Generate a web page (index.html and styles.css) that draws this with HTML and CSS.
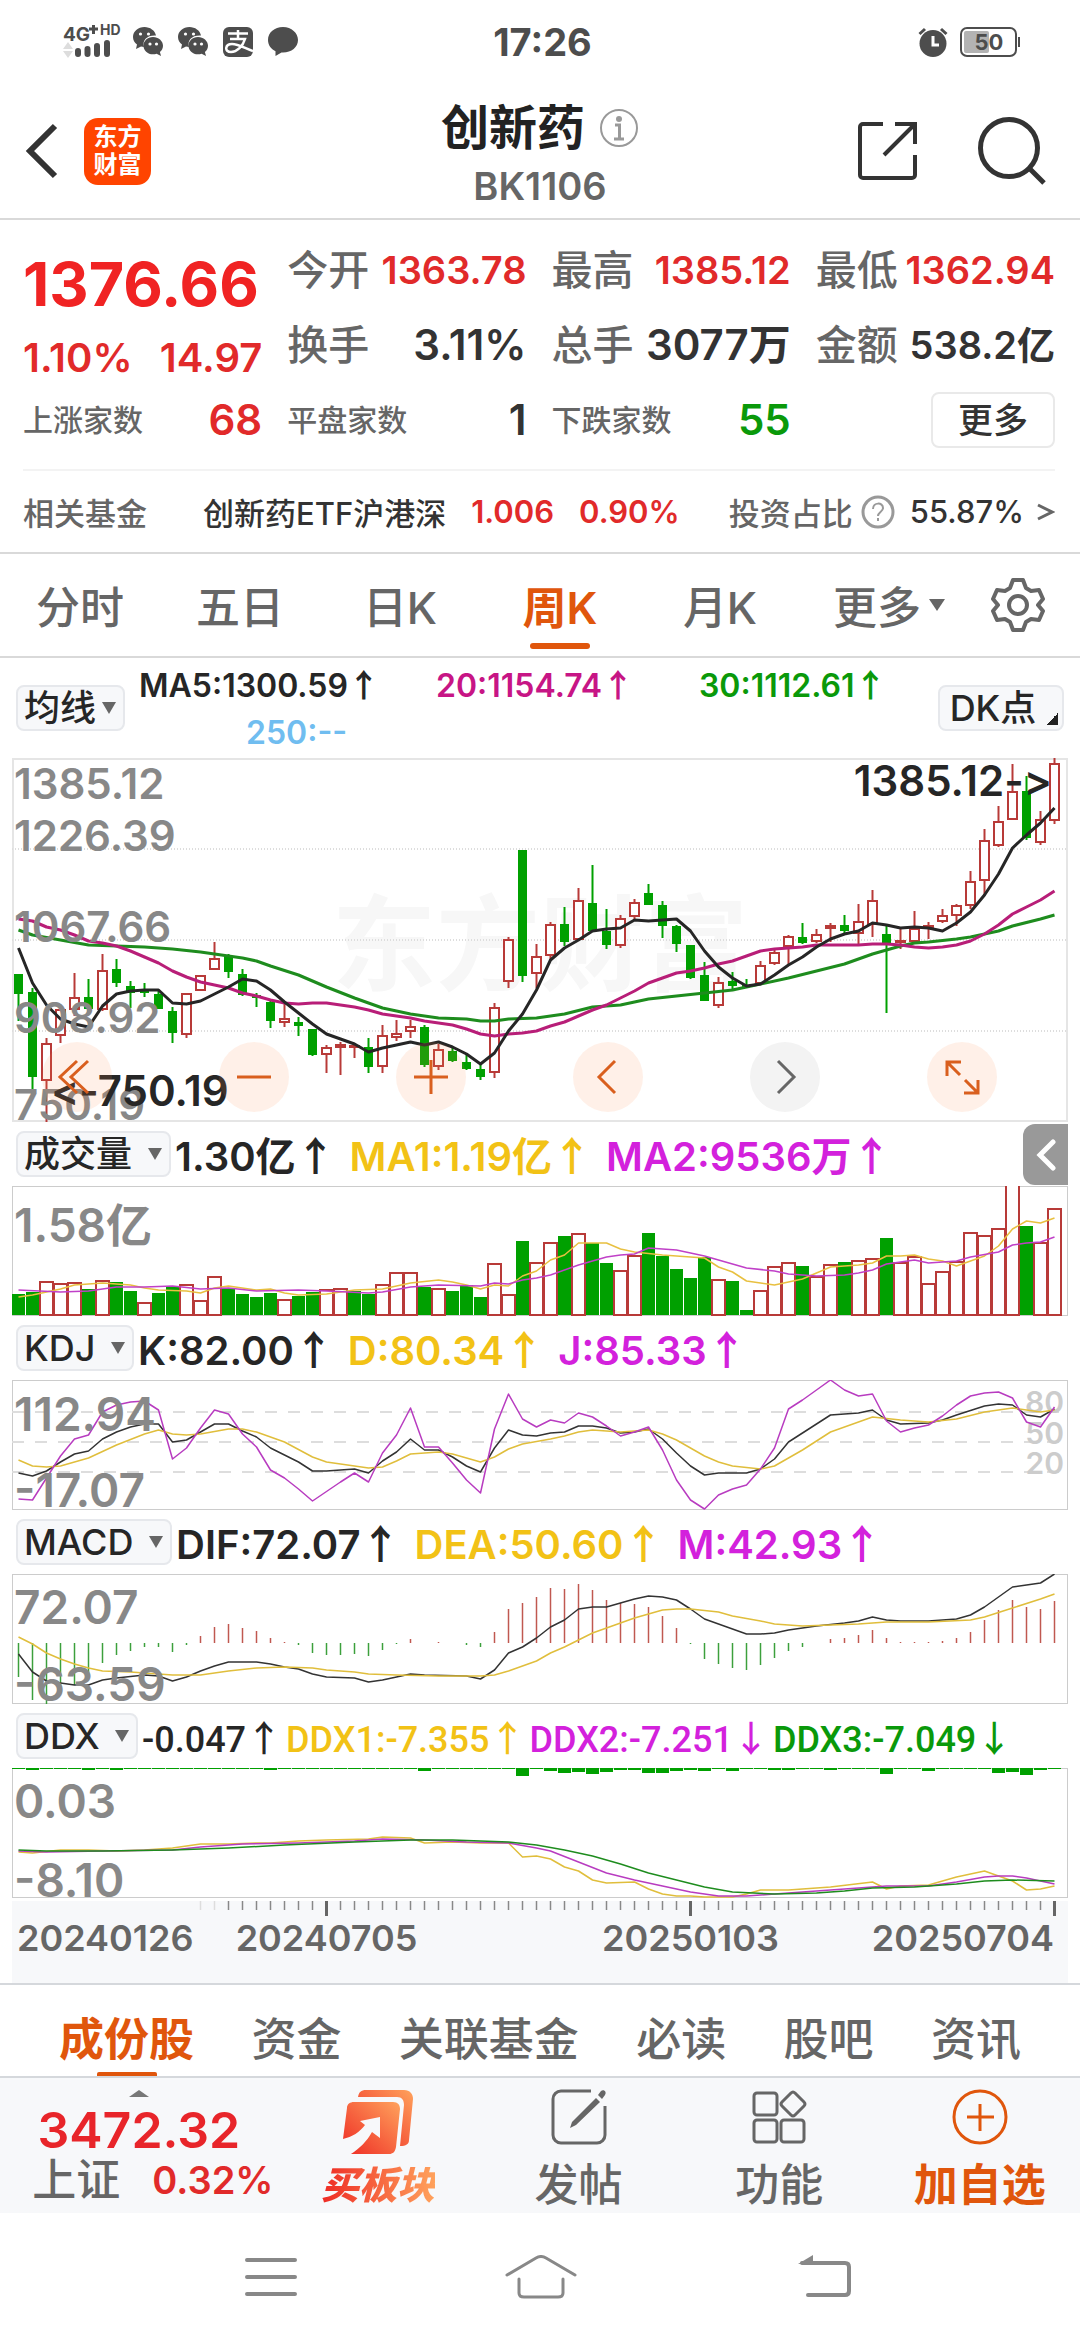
FILE: index.html
```
<!DOCTYPE html>
<html lang="zh-CN">

<head>
  <meta charset="UTF-8">
  <meta name="viewport" content="width=device-width, initial-scale=1.0">
  <title>创新药 BK1106</title>
  <link rel="stylesheet" href="styles.css">
</head>

<body>
  <div class="status">
    <div class="status-side">
      <svg class="signal" width="62" height="38" viewBox="0 0 62 38">
        <text x="0" y="18" class="signal-4g">4G</text>
        <path d="M26 6h9M30.500 2v9" stroke="#4d4d4d" stroke-width="3" />
        <text x="37" y="12" class="signal-hd">HD</text>
        <path d="M0 26l5-7 5 7zM0 28l5 7 5-7z" fill="#ddd" />
        <path d="M15 28v3M24.500 26v5M34 23v8M44 20v11" stroke="#4d4d4d" stroke-width="6" stroke-linecap="round" />
      </svg>
      <svg width="30" height="30" viewBox="0 0 30 30">
        <use href="#wechat" />
      </svg>
      <svg width="30" height="30" viewBox="0 0 30 30">
        <g id="wechat">
          <path d="M11.500 0C5 0 0 4.500 0 10c0 3 1.500 5.600 4 7.400L3 22l5-2.500c1 .3 2 .4 3 .4C9 13 14 8 23 8.500 22 3.500 17 0 11.500 0z" fill="#4d4d4d" />
          <path d="M20 10c-5.500 0-9.500 4-9.500 8.700s4 8.600 9.500 8.600c1.300 0 2.500-.2 3.600-.6L28 29l-1.100-4c2-1.600 3.100-3.800 3.100-6.300C30 14 25.500 10 20 10z" fill="#4d4d4d" />
          <circle cx="7.500" cy="7" r="1.600" fill="#fff" />
          <circle cx="15.500" cy="7" r="1.600" fill="#fff" />
          <circle cx="17" cy="17" r="1.600" fill="#fff" />
          <circle cx="23.500" cy="17" r="1.600" fill="#fff" />
        </g>
      </svg>
      <svg width="30" height="30" viewBox="0 0 30 30">
        <rect width="30" height="30" rx="6" fill="#4d4d4d" />
        <path d="M15 3v9M5 6.500h20M7 12h15C20 19 14 25 8 25c-7 0-6-8 1-8 7 0 14 5 21 7" fill="none" stroke="#fff" stroke-width="2.500" />
      </svg>
      <svg width="30" height="30" viewBox="0 0 30 30">
        <path d="M15 0C6.500 0 0 5.500 0 13c0 5 3 9 7.500 11.300V29l6-3.500H15c8.500 0 15-5.500 15-12.500S23.500 0 15 0z" fill="#4d4d4d" />
      </svg>
    </div>
    <span class="clock">17:26</span>
    <div class="status-side status-right">
      <svg width="30" height="30" viewBox="0 0 30 30">
        <circle cx="15" cy="16.500" r="13.500" fill="#4d4d4d" />
        <path d="M1.500 7L7 2M28.500 7L23 2" stroke="#4d4d4d" stroke-width="3" />
        <path d="M15 9v9h6" fill="none" stroke="#fff" stroke-width="3" />
      </svg>
      <svg width="62" height="30" viewBox="0 0 62 30">
        <rect x="1" y="1" width="55" height="28" rx="6" fill="none" stroke="#4d4d4d" stroke-width="2" />
        <rect x="4" y="4" width="25" height="22" rx="2" fill="#b3b3b3" />
        <rect x="58" y="10" width="2" height="10" fill="#4d4d4d" />
        <text x="29" y="23" class="battery-text">50</text>
      </svg>
    </div>
  </div>

  <header class="header">
    <div class="header-side">
      <button class="icon-btn" aria-label="返回">
        <svg width="34" height="60" viewBox="0 0 34 60">
          <path d="M31 5L6 30l25 25" fill="none" stroke="#333" stroke-width="6" />
        </svg>
      </button>
      <a class="logo" href="#">东方<br>财富</a>
    </div>
    <div class="title">
      <h1>创新药
        <svg width="40" height="40" viewBox="0 0 40 40">
          <circle cx="20" cy="20" r="18" fill="none" stroke="#999" stroke-width="2" />
          <circle cx="20" cy="11" r="3" fill="#999" />
          <path d="M16 17h4.500v13M15 31h10" fill="none" stroke="#999" stroke-width="3" />
        </svg>
      </h1>
      <p>BK1106</p>
    </div>
    <div class="header-side header-right">
      <button class="icon-btn" aria-label="分享">
        <svg width="60" height="60" viewBox="0 0 60 60">
          <path d="M25 3H5a3 3 0 0 0-3 3v48a3 3 0 0 0 3 3h49a3 3 0 0 0 3-3V34M37 3h20v20M57 3L26 34" fill="none" stroke="#333" stroke-width="4" />
        </svg>
      </button>
      <button class="icon-btn" aria-label="搜索">
        <svg width="68" height="68" viewBox="0 0 68 68">
          <circle cx="31" cy="31" r="28.500" fill="none" stroke="#333" stroke-width="5" />
          <path d="M51 51l15 15" stroke="#333" stroke-width="5" />
        </svg>
      </button>
    </div>
  </header>

  <section class="quote">
    <div class="stats">
      <div class="price">
        <strong>1376.66</strong>
        <div class="change"><span>1.10%</span><span>14.97</span></div>
      </div>
      <div class="stat"><span>今开</span><b class="red small">1363.78</b></div>
      <div class="stat"><span>最高</span><b class="red small">1385.12</b></div>
      <div class="stat"><span>最低</span><b class="red small">1362.94</b></div>
      <div class="stat"><span>换手</span><b>3.11%</b></div>
      <div class="stat"><span>总手</span><b>3077万</b></div>
      <div class="stat"><span>金额</span><b class="small">538.2亿</b></div>
      <div class="stat count"><span>上涨家数</span><b class="red">68</b></div>
      <div class="stat count"><span>平盘家数</span><b>1</b></div>
      <div class="stat count"><span>下跌家数</span><b class="green">55</b></div>
      <div class="stat"><button class="more-btn">更多</button></div>
    </div>
    <div class="fund">
      <span class="fund-label">相关基金</span>
      <a href="#">创新药ETF沪港深</a>
      <span class="red">1.006</span>
      <span class="red">0.90%</span>
      <span class="fund-ratio">投资占比
        <svg width="34" height="34" viewBox="0 0 34 34">
          <circle cx="17" cy="17" r="15" fill="none" stroke="#999" stroke-width="3" />
          <path d="M12 14c0-7 10-7 10-1 0 4-5 4-5 8M17 23v3" fill="none" stroke="#999" stroke-width="2" />
        </svg>
      </span>
      <span>55.87%</span>
      <svg width="18" height="20" viewBox="0 0 18 20">
        <path d="M1 3l14 7-14 7" fill="none" stroke="#666" stroke-width="3" />
      </svg>
    </div>
  </section>

  <nav class="periods">
    <a href="#">分时</a>
    <a href="#">五日</a>
    <a href="#">日K</a>
    <a href="#" class="active">周K</a>
    <a href="#">月K</a>
    <a href="#">更多<i class="caret"></i></a>
    <button class="icon-btn" aria-label="设置">
      <svg width="54" height="54" viewBox="0 0 54 54">
        <path d="M22 2h10l3 8 5 3 8-1 4 9-5 6 5 6-4 9-8-1-5 3-3 8H22l-3-8-5-3-8 1-4-9 5-6-5-6 4-9 8 1 5-3z" fill="none" stroke="#666" stroke-width="4" stroke-linejoin="round" />
        <circle cx="27" cy="27" r="9" fill="none" stroke="#666" stroke-width="4" />
      </svg>
    </button>
  </nav>

  <main class="charts">
    <div class="ma-row">
      <label class="picker picker-ma"><select aria-label="主图指标"><option>均线</option></select></label>
      <div class="ma-values">
        <span>MA5:1300.59<i class="arrow">↑</i></span>
        <span class="pink">20:1154.74<i class="arrow">↑</i></span>
        <span class="green">30:1112.61<i class="arrow">↑</i></span>
        <span class="blue">250:--</span>
      </div>
      <button class="dk-btn">DK点</button>
    </div>
    <div class="main-chart">
      <svg class="plot plot-main" id="kline" viewBox="0 0 1056 364"></svg>
      <div class="tools">
        <button aria-label="最左"><svg viewBox="0 0 70 70"><path d="M35 19L18 35l17 16M46 19L29 35l17 16" /></svg></button>
        <button aria-label="缩小"><svg viewBox="0 0 70 70"><path d="M18 35h34" /></svg></button>
        <button aria-label="放大"><svg viewBox="0 0 70 70"><path d="M18 35h34M35 18v34" /></svg></button>
        <button aria-label="左移"><svg viewBox="0 0 70 70"><path d="M42 19L26 35l16 16" /></svg></button>
        <button aria-label="右移" class="off"><svg viewBox="0 0 70 70"><path d="M28 19l16 16-16 16" /></svg></button>
        <button aria-label="全屏"><svg viewBox="0 0 70 70"><path d="M20 34V20h14M20 20l13 13M51 38v13H37M51 51L38 38" /></svg></button>
      </div>
    </div>

    <div class="ind-row">
      <label class="picker"><select aria-label="副图一"><option>成交量</option></select></label>
      <span>1.30亿<i class="arrow">↑</i></span>
      <span class="yellow">MA1:1.19亿<i class="arrow">↑</i></span>
      <span class="purple">MA2:9536万<i class="arrow">↑</i></span>
      <button class="side-btn" aria-label="展开">
        <svg width="20" height="32" viewBox="0 0 20 32">
          <path d="M17 3L4 16l13 13" fill="none" stroke="#fff" stroke-width="5" stroke-linecap="round" />
        </svg>
      </button>
    </div>
    <svg class="plot" id="volume" viewBox="0 0 1056 130"></svg>

    <div class="ind-row">
      <label class="picker"><select aria-label="副图二"><option>KDJ</option></select></label>
      <span>K:82.00<i class="arrow">↑</i></span>
      <span class="yellow">D:80.34<i class="arrow">↑</i></span>
      <span class="purple">J:85.33<i class="arrow">↑</i></span>
    </div>
    <svg class="plot" id="kdj" viewBox="0 0 1056 130"></svg>

    <div class="ind-row">
      <label class="picker"><select aria-label="副图三"><option>MACD</option></select></label>
      <span>DIF:72.07<i class="arrow">↑</i></span>
      <span class="yellow">DEA:50.60<i class="arrow">↑</i></span>
      <span class="purple">M:42.93<i class="arrow">↑</i></span>
    </div>
    <svg class="plot" id="macd" viewBox="0 0 1056 130"></svg>

    <div class="ind-row tight">
      <label class="picker"><select aria-label="副图四"><option>DDX</option></select></label>
      <span>-0.047<i class="arrow">↑</i></span>
      <span class="yellow">DDX1:-7.355<i class="arrow">↑</i></span>
      <span class="purple">DDX2:-7.251<i class="arrow">↓</i></span>
      <span class="green">DDX3:-7.049<i class="arrow">↓</i></span>
    </div>
    <svg class="plot" id="ddx" viewBox="0 0 1056 130"></svg>
    <svg class="axis" id="axis" viewBox="0 0 1056 82"></svg>
  </main>

  <nav class="sections">
    <a href="#" class="active">成份股</a>
    <a href="#">资金</a>
    <a href="#">关联基金</a>
    <a href="#">必读</a>
    <a href="#">股吧</a>
    <a href="#">资讯</a>
  </nav>

  <footer class="toolbar">
    <a class="index" href="#">
      <i class="fold"></i>
      <strong>3472.32</strong>
      <span class="index-row"><span>上证</span><span class="red">0.32%</span></span>
    </a>
    <a class="buy" href="#">
      <svg width="70" height="66" viewBox="0 0 70 66">
        <defs>
          <linearGradient id="hot" x1="0" y1="1" x2="1" y2="0">
            <stop offset="0" stop-color="#ee2a24" />
            <stop offset="1" stop-color="#ffa25c" />
          </linearGradient>
        </defs>
        <path d="M15 8c1-5 3-7 8-7h38c6 0 9 4 9 9l-4 41c0 4-3 6-9 6l4-41c0-5-2-8-7-8z" fill="url(#hot)" />
        <path d="M4 19c0-4 3-6 7-6h39c5 0 7 3 7 7l-4 38c-1 5-3 7-7 7H8c9-6 16-13 21-22l8 6V28l-20 4 5 4C17 43 9 48 0 50z" fill="url(#hot)" />
      </svg>
      <span>买板块</span>
    </a>
    <a href="#">
      <svg width="56" height="56" viewBox="0 0 56 56">
        <path d="M40 2H10a8 8 0 0 0-8 8v36a8 8 0 0 0 8 8h36a8 8 0 0 0 8-8V17" fill="none" stroke="#666" stroke-width="3" />
        <path d="M45 9l4 4-24 23-6 3 2-6zM47 6l3-4c3-2 6 1 4 4l-3 4z" fill="#666" />
      </svg>
      <span>发帖</span>
    </a>
    <a href="#">
      <svg width="56" height="56" viewBox="0 0 56 56" fill="none" stroke="#666" stroke-width="3">
        <rect x="3" y="4" width="23" height="22" rx="3" />
        <rect x="3" y="31" width="23" height="22" rx="3" />
        <rect x="30" y="31" width="23" height="22" rx="3" />
        <path d="M40 4q2-2 4 0l9 9q2 2 0 4l-9 9q-2 2-4 0l-9-9q-2-2 0-4z" />
      </svg>
      <span>功能</span>
    </a>
    <a class="add" href="#">
      <svg width="56" height="56" viewBox="0 0 56 56" fill="none" stroke="#e0560c" stroke-width="3">
        <circle cx="28" cy="28" r="26" />
        <path d="M15 28h27M28 15v27" />
      </svg>
      <span>加自选</span>
    </a>
  </footer>

  <div class="sysnav">
    <button class="icon-btn" aria-label="菜单">
      <svg width="72" height="44" viewBox="0 0 72 44">
        <path d="M12 5h48M12 22h48M12 39h48" stroke="#888" stroke-width="4" stroke-linecap="round" />
      </svg>
    </button>
    <button class="icon-btn" aria-label="主页">
      <svg width="72" height="44" viewBox="0 0 72 44">
        <path d="M2 20L31 3q5-3 10 0l29 17M14 24v14q0 4 5 4h34q5 0 5-4V24" fill="none" stroke="#888" stroke-width="3" stroke-linecap="round" />
      </svg>
    </button>
    <button class="icon-btn" aria-label="后退">
      <svg width="72" height="44" viewBox="0 0 72 44">
        <path d="M14 8h43q4 0 4 4v24q0 4-4 4H20" fill="none" stroke="#888" stroke-width="4" stroke-linecap="round" />
        <path d="M10 9l15-9v9z" fill="#888" />
      </svg>
    </button>
  </div>

  <script src="script.js"></script>
</body>

</html>
```
FILE: styles.css
```
* {
  box-sizing: border-box;
}

body {
  margin: 0;
  background: #fff;
  color: #333;
  font-family: Inter, "Noto Sans CJK SC", sans-serif;
  font-weight: 500;
}

h1,
p {
  margin: 0;
}

a {
  color: inherit;
  text-decoration: none;
}

button,
select {
  font: inherit;
  color: inherit;
  border: 0;
  padding: 0;
  background: none;
}

svg {
  display: block;
  flex: none;
}

i {
  font-style: normal;
}

.icon-btn {
  display: flex;
  align-items: center;
  justify-content: center;
}

.red {
  color: #e12a2a;
}

.green {
  color: #0a990a;
}

.yellow {
  color: #f2c216;
}

.purple {
  color: #d321dc;
}

.pink {
  color: #c71585;
}

.blue {
  color: #70bdf0;
}

/* status bar */
.status {
  display: grid;
  grid-template-columns: 1fr auto 1fr;
  align-items: center;
  height: 84px;
  padding: 0 58px 0 63px;
  color: #4d4d4d;
}

.status-side {
  display: flex;
  align-items: center;
  gap: 15px;
}

.status-right {
  justify-content: flex-end;
  gap: 12px;
}

.signal {
  margin-right: -7px;
  overflow: visible;
}

.signal-4g,
.signal-hd,
.battery-text {
  font-weight: 700;
  fill: #4d4d4d;
}

.signal-4g {
  font-size: 19px;
}

.signal-hd {
  font-size: 14px;
}

.battery-text {
  font-size: 22px;
  text-anchor: middle;
}

.clock {
  font-size: 38px;
  font-weight: 700;
}

/* header */
.header {
  display: grid;
  grid-template-columns: 1fr auto 1fr;
  align-items: center;
  height: 136px;
  padding: 0 24px;
  border-bottom: 2px solid #d9d9d9;
}

.header-side {
  display: flex;
  align-items: center;
  gap: 26px;
}

.header-right {
  justify-content: flex-end;
  gap: 60px;
  padding-right: 10px;
}

.logo {
  width: 67px;
  height: 67px;
  padding-top: 5px;
  border-radius: 14px;
  background: #ff4400;
  color: #fff;
  font-size: 24px;
  font-weight: 700;
  line-height: 28px;
  text-align: center;
}

.title {
  padding-top: 5px;
  text-align: center;
}

.title h1 {
  display: flex;
  align-items: center;
  gap: 14px;
  color: #222;
  font-size: 48px;
  font-weight: 600;
  line-height: 64px;
}

.title p {
  color: #666;
  font-size: 38px;
  font-weight: 600;
  line-height: 52px;
}

/* quote */
.quote {
  padding: 12px 25px 0 23px;
  border-bottom: 2px solid #d9d9d9;
}

.stats {
  display: grid;
  grid-template-columns: repeat(4, 1fr);
  grid-auto-rows: 75px;
  column-gap: 25px;
  padding-bottom: 12px;
  border-bottom: 2px solid #f3f3f3;
}

.price {
  grid-row: span 2;
  padding-top: 10px;
  color: #e12a2a;
}

.price strong {
  display: block;
  color: #f02323;
  font-size: 61px;
  line-height: 84px;
}

.change {
  display: flex;
  justify-content: space-between;
  font-size: 40px;
  font-weight: 600;
  line-height: 64px;
}

.stat {
  display: flex;
  align-items: center;
  justify-content: space-between;
  color: #666;
  font-size: 41px;
  line-height: 56px;
  white-space: nowrap;
}

.stat b {
  color: #333;
  font-size: 42px;
  font-weight: 600;
}

.stat b.red {
  color: #e12a2a;
}

.stat b.green {
  color: #0a990a;
}

.stat b.small {
  font-size: 38px;
}

.count {
  font-size: 30px;
}

.more-btn {
  width: 124px;
  height: 56px;
  margin-left: auto;
  border: 2px solid #e9e9e9;
  border-radius: 8px;
  color: #333;
  font-size: 35px;
  line-height: 50px;
}

.fund {
  display: flex;
  align-items: center;
  height: 81px;
  gap: 25px;
  font-size: 31px;
  white-space: nowrap;
}

.fund > * {
  flex: none;
}

.fund .red {
  font-weight: 600;
}

.fund-label {
  width: 155px;
  color: #666;
}

.fund-ratio {
  display: flex;
  align-items: center;
  gap: 8px;
  margin: 0 -10px 0 auto;
  color: #666;
}

.fund svg:last-child {
  margin-left: -12px;
}

.fund-ratio svg:last-child {
  margin-left: 0;
}

/* period tabs */
.periods {
  display: grid;
  grid-template-columns: repeat(5, 160fr) 178fr 80fr;
  height: 104px;
  padding-right: 22px;
  border-bottom: 2px solid #d9d9d9;
  color: #666;
  font-size: 44px;
}

.periods a {
  position: relative;
  display: flex;
  align-items: center;
  justify-content: center;
}

.active {
  color: #e0560c;
  font-weight: 600;
}

.periods .active::after,
.sections .active::after {
  content: "";
  position: absolute;
  bottom: 7px;
  left: 50%;
  width: 60px;
  height: 6px;
  margin-left: -30px;
  border-radius: 3px;
  background: #e0560c;
}

.caret {
  margin-left: 8px;
  border: 8px solid transparent;
  border-top: 12px solid #666;
  border-bottom: 0;
}

/* charts */
.charts {
  padding: 0 12px;
  color: #262626;
}

.ma-row {
  display: flex;
  align-items: center;
  height: 100px;
  padding: 0 4px;
}

.picker {
  position: relative;
  display: inline-flex;
  flex: none;
}

.picker select {
  appearance: none;
  height: 46px;
  padding: 0 36px 0 6px;
  border: 2px solid #e6e8ec;
  border-radius: 8px;
  background: #f7f8fa;
  font-size: 36px;
  font-weight: 500;
  line-height: 42px;
}

.picker::after {
  content: "";
  position: absolute;
  top: 17px;
  right: 9px;
  border: 7px solid transparent;
  border-top: 12px solid #666;
  border-bottom: 0;
  pointer-events: none;
}

.picker-ma select {
  padding-right: 26px;
}

.ma-values {
  display: grid;
  grid-template-columns: 297px 263px 1fr;
  flex: 1;
  padding-left: 14px;
  font-size: 32px;
  font-weight: 600;
  line-height: 47px;
  white-space: nowrap;
}

.ma-values .blue {
  padding-left: 107px;
}

.arrow {
  font-family: "Noto Sans CJK SC", sans-serif;
}

.dk-btn {
  width: 126px;
  height: 46px;
  padding-right: 16px;
  border: 2px solid #e6e8ec;
  border-radius: 8px;
  background: linear-gradient(135deg, transparent 50%, #222 50%) right 4px bottom 4px / 12px 12px no-repeat #f7f8fa;
  font-size: 36px;
  line-height: 42px;
  white-space: nowrap;
}

.main-chart {
  position: relative;
}

.plot {
  width: 100%;
  box-shadow: inset 0 0 0 1px #ccc;
}

.plot-main {
  box-shadow: inset 0 0 0 2px #e5e5e5;
}

.plot text {
  fill: #888;
  font-size: 46px;
  font-weight: 600;
}

.plot-main text {
  font-size: 42px;
}

.plot .mark {
  fill: #262626;
  font-variant-ligatures: none;
}

.plot .level {
  fill: #ccc;
  font-size: 30px;
  text-anchor: end;
}

.plot .watermark {
  fill: #f7f7f7;
  font-size: 104px;
  font-weight: 700;
}

.tools {
  position: absolute;
  left: 0;
  right: 0;
  bottom: 10px;
  display: flex;
  justify-content: space-between;
  padding: 0 71px 0 30px;
}

.tools button {
  width: 70px;
  height: 70px;
  border-radius: 50%;
  background: rgba(255, 140, 80, .13);
}

.tools path {
  fill: none;
  stroke: #d95f1e;
  stroke-width: 3;
}

.tools .off {
  background: #f3f3f3;
}

.tools .off path {
  stroke: #666;
}

.ind-row {
  position: relative;
  display: flex;
  align-items: center;
  height: 64px;
  padding-left: 4px;
  font-size: 40px;
  font-weight: 600;
  white-space: nowrap;
}

.ind-row span {
  margin: 0 10px 0 4px;
}

.tight {
  font-family: Roboto, "Noto Sans CJK SC", sans-serif;
  font-size: 36px;
  font-weight: 500;
}

.tight select {
  font-family: Inter, sans-serif;
}

.tight span {
  margin-right: 0;
}

.side-btn {
  position: absolute;
  right: 0;
  top: 2px;
  display: flex;
  align-items: center;
  justify-content: center;
  width: 45px;
  height: 61px;
  border-radius: 12px 0 0 12px;
  background: #999;
}

.axis {
  width: 100%;
  margin-top: 3px;
  background: #f7f8fa;
}

.axis text {
  fill: #666;
  font-size: 36px;
  font-weight: 600;
}

/* section tabs */
.sections {
  display: flex;
  justify-content: space-between;
  height: 95px;
  padding: 0 59px;
  border-top: 2px solid #d5d8dc;
  border-bottom: 2px solid #d5d8dc;
  color: #666;
  font-size: 45px;
}

.sections a {
  position: relative;
  display: flex;
  align-items: center;
  padding-top: 12px;
}

.sections .active {
  color: #e0560c;
}

.sections .active::after {
  bottom: 0;
  height: 4px;
  border-radius: 2px 2px 0 0;
}

/* bottom toolbar */
.toolbar {
  display: grid;
  grid-template-columns: 277fr repeat(4, 200fr);
  height: 135px;
  background: #f7f8fa;
  color: #666;
  font-size: 44px;
}

.toolbar a {
  display: flex;
  flex-direction: column;
  align-items: center;
  justify-content: space-between;
  padding: 11px 0 0;
  line-height: 56px;
}

.toolbar .index {
  justify-content: flex-start;
  padding: 12px 0 0;
}

.fold {
  border: 10px solid transparent;
  border-bottom: 7px solid #777;
  border-top: 0;
}

.index strong {
  margin-top: 5px;
  color: #e8252a;
  font-size: 50px;
  font-weight: 600;
}

.index-row {
  display: flex;
  gap: 32px;
  margin-left: 28px;
  line-height: 44px;
}

.index-row .red {
  font-size: 38px;
  font-weight: 600;
}

.buy span {
  background: linear-gradient(90deg, #ee2a24, #ffa25c);
  background-clip: text;
  color: transparent;
  font-size: 38px;
  font-style: italic;
  font-weight: 900;
}

.add {
  color: #e0560c;
  font-weight: 600;
}

/* system navigation */
.sysnav {
  display: grid;
  grid-template-columns: 270fr 270fr 296fr;
  padding: 42px 108px 36px 136px;
}
```
FILE: script.js
```
const STEP = 14
const FIRST = 6.5
const RED = '#b83a38'
const GREEN = '#00a000'

// [high, open/close top, open/close bottom, low, rising]
const candles = [
  [216, 216, 236, 263, 0], [230, 234, 319, 333, 0], [280, 285, 323, 364, 1], [251, 251, 278, 285, 1],
  [215, 239, 252, 258, 1], [221, 239, 251, 256, 0], [196, 212, 252, 253, 1], [201, 211, 225, 229, 0],
  [223, 228, 235, 250, 0], [225, 233, 235, 239, 0], [233, 236, 251, 251, 0], [249, 253, 275, 285, 0],
  [235, 235, 277, 280, 1], [217, 217, 233, 233, 1], [184, 200, 212, 212, 1], [196, 198, 214, 220, 0],
  [211, 216, 237, 238, 0], [235, 237, 240, 249, 0], [242, 244, 263, 270, 0], [244, 260, 265, 269, 1],
  [259, 264, 268, 278, 0], [271, 271, 297, 298, 0], [287, 289, 297, 315, 1], [284, 286, 290, 317, 1],
  [286, 287, 288, 300, 1], [280, 289, 309, 315, 0], [267, 277, 309, 315, 1], [262, 275, 280, 283, 1],
  [262, 268, 274, 280, 1], [267, 269, 307, 309, 0], [286, 291, 309, 312, 1], [290, 293, 303, 304, 0],
  [295, 304, 311, 312, 0], [306, 311, 319, 322, 0], [245, 249, 315, 320, 1], [179, 181, 224, 230, 1],
  [92, 92, 218, 224, 0], [186, 198, 216, 230, 1], [164, 166, 198, 202, 1], [149, 166, 184, 188, 0],
  [130, 142, 182, 182, 1], [107, 145, 173, 173, 0], [151, 173, 187, 191, 0], [157, 160, 188, 190, 1],
  [141, 144, 159, 162, 1], [126, 135, 147, 147, 0], [143, 147, 168, 180, 0], [167, 168, 186, 194, 0],
  [187, 187, 220, 221, 0], [204, 217, 243, 243, 0], [219, 224, 248, 250, 1], [214, 223, 228, 231, 0],
  [221, 227, 228, 229, 0], [203, 207, 226, 226, 1], [192, 194, 206, 207, 1], [177, 178, 189, 207, 1],
  [165, 179, 185, 186, 0], [171, 176, 184, 185, 1], [165, 167, 171, 184, 1], [157, 167, 173, 175, 0],
  [146, 163, 176, 188, 1], [132, 142, 167, 179, 1], [168, 176, 185, 255, 0], [171, 182, 184, 191, 1],
  [153, 170, 184, 185, 1], [164, 167, 170, 181, 1], [151, 157, 164, 165, 1], [146, 147, 158, 168, 1],
  [113, 123, 148, 151, 1], [71, 82, 123, 138, 1], [48, 63, 88, 89, 1], [6, 33, 62, 62, 1],
  [18, 33, 80, 82, 0], [53, 61, 85, 87, 1], [0, 5, 63, 66, 1]
]

// negative = falling week
const volumes = [
  -22, -24, 35, 33, 34, -27, 36, -34, -25, 14, -23, -30, 32, 16, 40, -27, -22, -19, -23, 17,
  -20, -24, 27, 28, -25, -22, 32, 44, 44, -29, 28, -25, -31, -19, 53, 22, -75, 54, 74, -80,
  83, -73, -53, 46, 61, -83, -60, -47, -38, -59, 37, -35, -6, 26, 50, 54, -50, 40, 52, -54,
  56, 58, -78, 54, 60, 33, 45, 55, 84, 81, 88, 134, -90, 74, 108
]

const macdBars = [
  -34, -57, -61, -50, -42, -34, -20, -12, -8, -4, -4, -9, -2, 7, 16, 19, 15, 12, 5, 1,
  -2, -10, -12, -12, -11, -13, -7, -1, 4, 0, 1, 0, -2, -4, 11, 34, 40, 46, 55, 54,
  59, 53, 43, 40, 39, 36, 27, 15, -1, -16, -21, -25, -27, -22, -15, -8, -4, 0, 4, 5,
  8, 13, 5, 1, 1, 1, 2, 5, 11, 23, 33, 43, 36, 34, 42
]

const ddxBars = {
  1: 2, 5: 2, 7: 2, 18: 2, 29: 3, 36: 8, 38: 3, 39: 5, 40: 4, 41: 6, 42: 4, 43: 2, 44: 2, 45: 5, 46: 5,
  47: 3, 48: 2, 49: 3, 51: 3, 54: 2, 55: 2, 58: 2, 62: 6, 65: 3, 70: 5, 71: 4, 72: 7, 73: 2
}

// lines are "week:y" points, weeks left out are joined straight
const lines = {
  ma5: '0:190 1:225 2:247 3:261 4:266 5:269 6:248 7:236 8:233 9:232 10:232 11:245 12:246 13:243 14:236 15:229 16:221 17:223 18:232 19:244 20:255 21:266 22:276 23:281 24:286 25:294 26:290 27:287 28:284 29:287 30:284 31:289 32:296 33:306 34:295 35:273 36:256 37:232 38:202 39:190 40:182 41:173 42:171 43:170 44:162 45:163 46:162 47:161 48:173 49:193 50:209 51:220 52:228 53:226 54:217 55:207 56:199 57:189 58:181 59:176 60:173 61:165 62:167 63:170 64:169 65:170 66:173 67:165 68:154 69:137 70:116 71:90 72:77 73:65 74:50',
  ma20: '0:161 1:163 2:169 3:172 4:177 5:183 6:185 7:188 8:193 9:199 10:205 11:213 12:219 13:224 14:227 15:230 16:235 17:238 18:242 19:245 20:246 21:245 22:245 23:247 24:249 25:252 26:256 27:258 28:260 29:263 30:265 31:267 32:271 33:276 34:278 35:276 36:275 37:273 38:268 39:264 40:258 41:252 42:247 43:240 44:233 45:225 46:220 47:215 48:213 49:210 50:206 51:203 52:198 53:193 54:191 55:190 56:189 57:187 60:187 61:186 62:186 63:187 64:189 65:190 66:189 67:187 68:183 69:176 70:167 71:156 72:149 73:142 74:133',
  ma30: '0:172 1:177 3:182 5:187 7:188 9:189 11:191 13:194 14:196 16:200 17:203 18:208 20:217 22:229 24:240 26:250 28:256 30:260 32:261 33:263 34:263 35:261 37:260 38:258 39:256 41:249 43:247 45:241 47:238 49:235 51:232 53:226 55:220 57:213 59:206 61:196 63:188 64:185 65:184 67:181 68:179 70:173 71:168 73:161 74:157',
  vol1: '0:111 1:109 3:103 4:99 6:97 8:99 9:102 10:104 12:105 13:107 14:102 15:100 17:104 18:103 19:107 20:109 22:108 24:104 26:103 28:97 30:94 31:96 32:99 33:103 34:99 35:100 36:90 37:85 38:74 39:69 40:57 42:57 43:63 44:66 46:69 48:71 49:72 50:81 51:86 52:95 53:97 54:99 55:96 56:93 57:87 58:81 59:80 60:79 61:77 62:70 63:70 64:69 65:73 66:75 67:80 68:75 69:70 70:60 71:43 72:35 73:37 74:32',
  vol2: '0:104 3:106 5:105 7:101 9:101 11:100 13:103 15:102 17:105 20:104 22:105 25:107 26:106 28:101 30:99 33:100 34:97 35:98 36:94 37:92 38:89 40:79 42:71 43:69 44:68 45:62 47:64 49:70 50:74 52:82 54:85 55:88 57:90 59:89 60:87 61:84 62:78 64:74 65:77 67:75 68:71 70:66 71:59 72:57 73:56 74:51',
  k: '0:93 1:96 2:91 3:82 4:74 5:71 6:59 7:52 8:47 9:44 10:44 11:62 12:60 13:52 14:44 15:44 16:51 17:57 18:68 20:82 21:91 22:91 24:89 25:93 26:81 27:72 28:59 29:70 30:70 31:77 32:86 33:92 34:68 35:50 36:55 37:56 38:53 39:52 40:46 41:46 42:48 43:53 44:52 45:49 46:59 47:73 48:86 49:95 50:93 52:93 53:89 54:79 55:62 57:44 58:35 60:33 61:30 62:40 63:44 65:43 66:40 67:35 69:26 70:24 71:25 72:35 73:37 74:29',
  d: '0:80 1:86 2:87 3:86 5:78 7:65 9:54 10:50 11:54 12:55 13:54 15:49 16:49 17:52 19:62 21:77 22:82 23:84 24:86 25:88 26:87 27:81 28:74 30:72 31:74 33:82 34:77 35:69 36:64 38:59 39:56 40:52 41:50 43:52 45:50 46:54 47:60 49:76 50:82 51:86 53:89 54:86 56:70 58:52 60:42 61:37 63:40 65:42 67:39 69:32 71:28 73:32 74:30',
  j: '0:119 1:120 2:98 3:76 4:59 5:55 6:32 7:25 8:22 9:21 10:30 11:79 12:68 13:48 14:30 15:34 16:54 17:67 18:90 19:98 20:109 21:121 23:102 24:93 25:102 26:73 27:55 28:28 29:67 30:67 31:83 32:100 33:113 34:49 35:14 36:39 37:47 38:40 39:43 40:33 41:37 42:46 43:56 44:52 45:47 46:70 47:100 48:120 49:129 50:115 51:109 52:105 53:89 54:68 55:29 56:20 57:10 58:0 59:10 60:16 61:14 62:41 63:52 64:48 65:45 66:36 67:25 68:16 69:13 70:12 71:18 72:42 73:47 74:27',
  dif: '0:80 1:98 2:107 3:109 4:111 5:111 6:106 7:104 9:101 10:102 11:107 12:103 13:97 14:92 15:88 17:88 18:90 19:93 20:95 21:100 22:103 24:104 25:108 26:106 28:100 29:101 32:102 33:105 34:96 35:79 36:73 37:64 38:53 39:46 40:35 41:33 42:33 43:29 44:25 45:22 46:23 47:26 48:35 49:45 50:50 51:55 52:60 53:60 54:59 55:56 57:52 59:49 60:47 61:43 62:46 63:47 65:47 67:45 68:41 69:33 70:23 71:13 72:11 73:9 74:0',
  dea: '0:63 1:70 2:79 3:85 4:90 5:94 6:97 8:98 11:101 13:101 15:97 17:94 19:93 21:94 22:96 24:98 25:100 27:101 30:102 33:102 34:101 35:97 36:92 37:87 38:79 39:73 40:66 41:59 42:54 43:49 44:44 45:40 46:36 47:35 48:35 50:38 51:42 53:47 54:50 56:52 58:51 60:50 62:48 65:48 68:46 69:43 71:34 73:25 74:20',
  ddx1: '0:84 1:85 3:82 5:82 7:83 9:82 11:80 13:76 15:76 17:75 18:75 20:73 22:72 25:71 26:69 28:70 29:75 31:74 33:75 35:75 36:89 37:88 38:91 39:99 40:103 41:112 42:115 44:114 45:121 46:126 47:128 48:128 49:129 51:129 52:126 53:122 55:122 56:121 58:119 61:114 62:121 63:118 65:117 67:109 69:103 70:108 71:113 72:122 73:121 74:118',
  ddx2: '0:83 2:84 6:83 11:82 13:79 16:76 20:75 24:73 26:71 29:72 32:74 35:75 37:80 38:83 40:94 42:105 44:112 46:118 48:124 50:128 52:128 54:126 57:123 59:121 62:118 65:118 67:114 69:109 70:108 71:108 72:110 74:116',
  ddx3: '0:82 2:83 6:83 11:82 15:80 19:77 24:74 28:72 31:72 35:74 37:77 39:82 41:88 43:96 45:105 47:112 49:119 51:124 54:126 57:125 59:123 61:120 64:119 67:116 69:113 71:112 74:113'
}

function weekX(i) {
  return FIRST + i * STEP
}

function rect(x, y, w, h, rising) {
  if (!rising) return `<rect x="${x}" y="${y}" width="${w}" height="${h}" fill="${GREEN}"/>`
  return `<rect x="${x + 1}" y="${y + 1}" width="${w - 2}" height="${Math.max(h - 2, 1)}" fill="#fff" stroke="${RED}" stroke-width="2"/>`
}

function vline(x, y1, y2, color, width) {
  return `<path d="M${x} ${y1}V${y2}" stroke="${color}" stroke-width="${width}"/>`
}

function hline(y, dash, color) {
  return `<path d="M0 ${y}H1056" stroke="${color}" stroke-width="2" stroke-dasharray="${dash}"/>`
}

function polyline(name, color, width) {
  const points = lines[name].split(' ').map(p => {
    const [i, y] = p.split(':')
    return `${weekX(+i)},${y}`
  })
  return `<polyline points="${points.join(' ')}" fill="none" stroke="${color}" stroke-width="${width}" stroke-linejoin="round"/>`
}

function label(x, y, text, cls = '', anchor = 'start') {
  return `<text x="${x}" y="${y}" class="${cls}" text-anchor="${anchor}">${text}</text>`
}

function draw(id, parts) {
  document.getElementById(id).innerHTML = parts.join('')
}

draw('kline', [
  label(528, 225, '东方财富', 'watermark', 'middle'),
  ...[91, 182, 273].map(y => hline(y, '1 2', '#ddd')),
  ...candles.map(([high, top, bottom, low, rising], i) =>
    vline(weekX(i), high, low, rising ? RED : GREEN, 2) +
    rect(weekX(i) - (rising ? 5.5 : 4.5), top, rising ? 11 : 9, Math.max(bottom - top, 2), rising)),
  polyline('ma30', '#1e8c1e', 3),
  polyline('ma20', '#b81e78', 3),
  polyline('ma5', '#262626', 3),
  label(2, 41, '1385.12'),
  label(2, 93, '1226.39'),
  label(2, 184, '1067.66'),
  label(2, 275, '908.92'),
  label(2, 362, '750.19'),
  label(39, 348, '&lt;-750.19', 'mark'),
  label(1040, 38, '1385.12-&gt;', 'mark', 'end')
])

draw('volume', [
  ...volumes.map((v, i) => v > 0
    ? rect(weekX(i) - 7.5, 130 - v, 15, v, true)
    : rect(weekX(i) - 6.5, 130 + v, 13, -v - 1, false)),
  polyline('vol1', '#e8c040', 1.5),
  polyline('vol2', '#c040c8', 1.5),
  label(2, 56, '1.58亿')
])

draw('kdj', [
  ...[32, 62, 92].map(y => hline(y, '12 11', '#ddd')),
  label(1052, 33, '80', 'level', ''),
  label(1052, 64, '50', 'level', ''),
  label(1052, 94, '20', 'level', ''),
  polyline('k', '#333', 1.5),
  polyline('d', '#e0be3c', 1.5),
  polyline('j', '#b83cc0', 1.5),
  label(2, 51, '112.94'),
  label(2, 127, '-17.07')
])

draw('macd', [
  ...macdBars.map((v, i) => vline(weekX(i), 69, 69 - v, v > 0 ? '#c05850' : '#3ca03c', 1.5)),
  polyline('dif', '#333', 1.5),
  polyline('dea', '#e0be3c', 1.5),
  label(2, 50, '72.07'),
  label(2, 127, '-63.59')
])

draw('ddx', [
  ...candles.map((c, i) => rect(weekX(i) - 6.5, 0, 13, ddxBars[i] || 1, false)),
  polyline('ddx1', '#e0be3c', 1.5),
  polyline('ddx2', '#b83cc0', 1.5),
  polyline('ddx3', '#1e8c1e', 1.5),
  label(2, 50, '0.03'),
  label(2, 129, '-8.10')
])

draw('axis', [
  ...candles.map((c, i) => {
    if (i < 13) return ''
    const long = i === 22 || i === 48 || i === 74
    const color = i < 15 ? '#ddd' : '#888'
    return vline(weekX(i), 0, long ? 15 : 9, long ? '#666' : color, long ? 3 : 1.5)
  }),
  label(5, 50, '20240126'),
  label(weekX(22), 50, '20240705', '', 'middle'),
  label(weekX(48), 50, '20250103', '', 'middle'),
  label(1042, 50, '20250704', '', 'end')
])
```
